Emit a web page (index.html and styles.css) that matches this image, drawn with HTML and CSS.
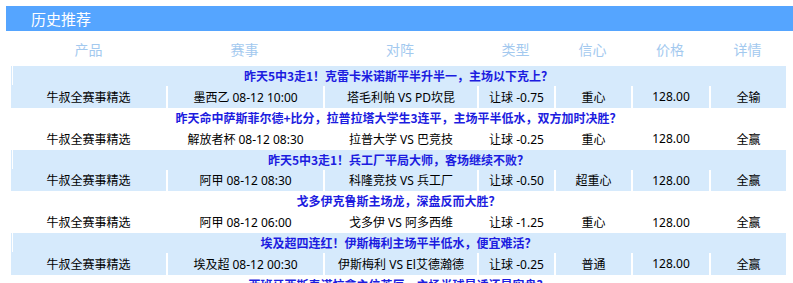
FILE: index.html
```html
<!DOCTYPE html>
<html lang="zh-CN">
<head>
<meta charset="utf-8">
<title>历史推荐</title>
<link rel="stylesheet" href="styles.css">
</head>
<body>
<div class="panel">
  <div class="bar"><span class="bar-title">历史推荐</span></div>
  <div class="table">
    <div class="thead">
      <div class="th">产品</div><div class="th">赛事</div><div class="th">对阵</div><div class="th">类型</div><div class="th">信心</div><div class="th">价格</div><div class="th">详情</div>
    </div>

    <div class="block alt">
      <div class="title"><span class="mark"></span><span class="title-text">昨天5中3走1！克雷卡米诺斯平半升半一，主场以下克上？</span></div>
      <div class="row">
        <div class="td">牛叔全赛事精选</div><div class="td sep">墨西乙 08-12 10:00</div><div class="td sep">塔毛利帕 VS PD坎昆</div><div class="td sep">让球 -0.75</div><div class="td sep">重心</div><div class="td sep">128.00</div><div class="td sep">全输</div>
      </div>
    </div>

    <div class="block">
      <div class="title"><span class="mark"></span><span class="title-text">昨天命中萨斯菲尔德+比分，拉普拉塔大学生3连平，主场平半低水，双方加时决胜？</span></div>
      <div class="row">
        <div class="td">牛叔全赛事精选</div><div class="td sep">解放者杯 08-12 08:30</div><div class="td sep">拉普大学 VS 巴竞技</div><div class="td sep">让球 -0.25</div><div class="td sep">重心</div><div class="td sep">128.00</div><div class="td sep">全赢</div>
      </div>
    </div>

    <div class="block alt">
      <div class="title"><span class="mark"></span><span class="title-text">昨天5中3走1！兵工厂平局大师，客场继续不败？</span></div>
      <div class="row">
        <div class="td">牛叔全赛事精选</div><div class="td sep">阿甲 08-12 08:30</div><div class="td sep">科隆竞技 VS 兵工厂</div><div class="td sep">让球 -0.50</div><div class="td sep">超重心</div><div class="td sep">128.00</div><div class="td sep">全赢</div>
      </div>
    </div>

    <div class="block">
      <div class="title"><span class="mark"></span><span class="title-text">戈多伊克鲁斯主场龙，深盘反而大胜？</span></div>
      <div class="row">
        <div class="td">牛叔全赛事精选</div><div class="td sep">阿甲 08-12 06:00</div><div class="td sep">戈多伊 VS 阿多西维</div><div class="td sep">让球 -1.25</div><div class="td sep">重心</div><div class="td sep">128.00</div><div class="td sep">全赢</div>
      </div>
    </div>

    <div class="block alt">
      <div class="title"><span class="mark"></span><span class="title-text">埃及超四连红！伊斯梅利主场平半低水，便宜难活？</span></div>
      <div class="row">
        <div class="td">牛叔全赛事精选</div><div class="td sep">埃及超 08-12 00:30</div><div class="td sep">伊斯梅利 VS El艾德瀚德</div><div class="td sep">让球 -0.25</div><div class="td sep">普通</div><div class="td sep">128.00</div><div class="td sep">全赢</div>
      </div>
    </div>

    <div class="block">
      <div class="title"><span class="mark"></span><span class="title-text">西班牙西斯泰诺拉拿主位英辰，主场半球是诱还是实盘？</span></div>
    </div>
  </div>
</div>
</body>
</html>
```

FILE: styles.css
```css
html, body {
  margin: 0;
  padding: 0;
  background: #ffffff;
}

body {
  padding: 6px 0 0 6px;
  overflow: hidden;
  font-family: "Noto Sans", "Noto Sans CJK SC", sans-serif;
}

.panel {
  display: flex;
  flex-direction: column;
}

.bar {
  height: 25px;
  background: #55a5ff;
  display: flex;
  align-items: center;
  padding-left: 25px;
}

.bar-title {
  color: #ffffff;
  font-size: 15px;
  line-height: 25px;
  font-family: "Noto Sans CJK SC", sans-serif;
}

.table {
  margin-left: 5px;
  width: 775px;
  display: flex;
  flex-direction: column;
}

.thead,
.row {
  display: grid;
  grid-template-columns: 155px 157px 154px 77px 77px 78px 77px;
}

.thead {
  height: 35px;
}

.th {
  display: flex;
  align-items: center;
  justify-content: center;
  color: #a3c9ef;
  font-size: 14px;
  font-family: "Noto Sans CJK SC", sans-serif;
}

.block {
  background: #ffffff;
}

.block.alt {
  background: #d6eafc;
}

.title {
  height: 20px;
  display: flex;
  align-items: flex-start;
}

.mark {
  width: 1px;
  height: 19px;
  margin-left: 1px;
  background: #ffffff;
  flex: none;
}

.title-text {
  flex: 1;
  margin-right: 2px;
  text-align: center;
  line-height: 19px;
  font-size: 12px;
  font-weight: bold;
  color: #1c1ce0;
  font-family: "Noto Sans CJK SC", sans-serif;
  white-space: nowrap;
}

.row {
  height: 21.75px;
}

.td {
  display: flex;
  align-items: center;
  justify-content: center;
  font-size: 12px;
  color: #000000;
  white-space: nowrap;
}

.td.sep {
  border-left: 2px solid #ffffff;
}
```
